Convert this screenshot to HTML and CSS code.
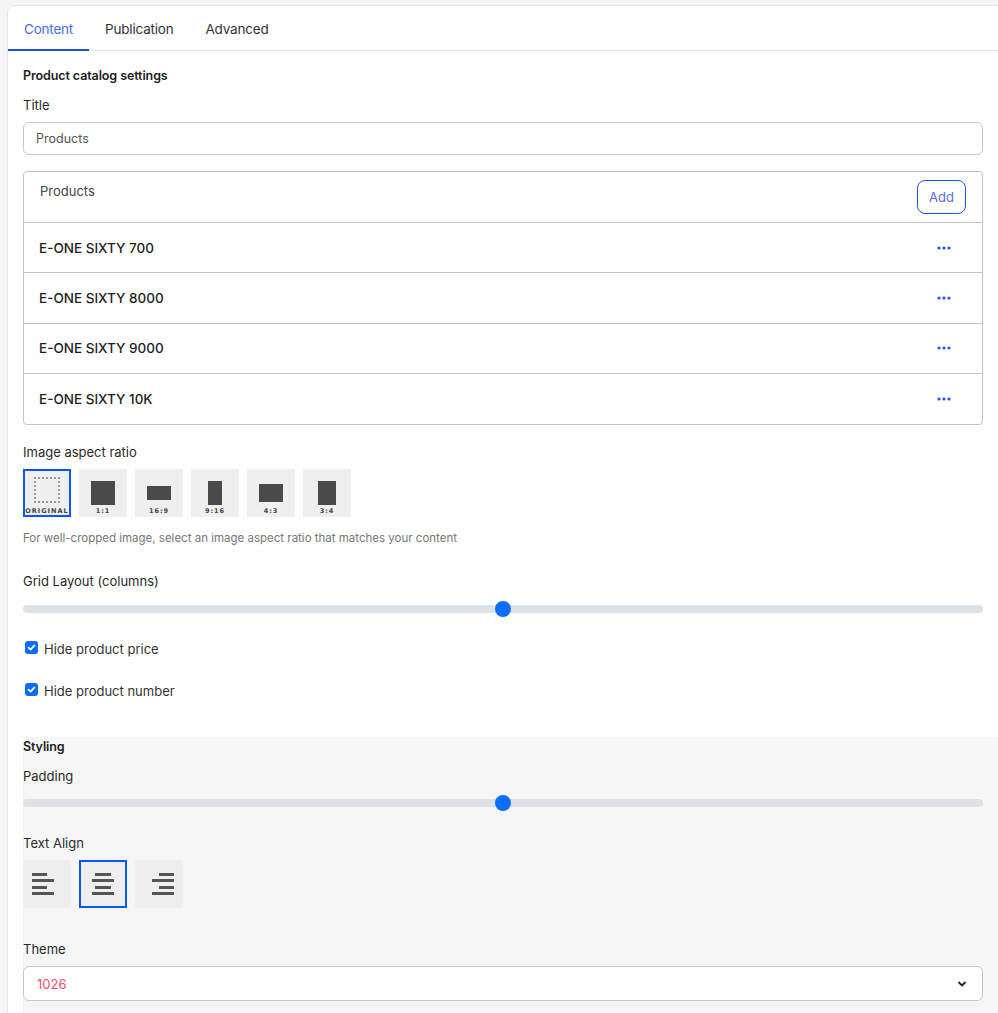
FILE: index.html
```html
<!DOCTYPE html>
<html>
<head>
<meta charset="utf-8">
<link rel="stylesheet" href="styles.css">
</head>
<body>
<div class="card">
  <div class="tabs">
    <div class="tab active">Content</div>
    <div class="tab">Publication</div>
    <div class="tab">Advanced</div>
  </div>
  <div class="content">
    <div class="section-title">Product catalog settings</div>
    <div class="label">Title</div>
    <div class="input">Products</div>

    <div class="products">
      <div class="products-head">
        <span class="products-title">Products</span>
        <button class="add-btn">Add</button>
      </div>
      <div class="prod-row"><span>E-ONE SIXTY 700</span><svg class="dots" width="14" height="4" viewBox="0 0 14 4"><circle cx="2" cy="2" r="1.6"/><circle cx="7" cy="2" r="1.6"/><circle cx="12" cy="2" r="1.6"/></svg></div>
      <div class="prod-row"><span>E-ONE SIXTY 8000</span><svg class="dots" width="14" height="4" viewBox="0 0 14 4"><circle cx="2" cy="2" r="1.6"/><circle cx="7" cy="2" r="1.6"/><circle cx="12" cy="2" r="1.6"/></svg></div>
      <div class="prod-row"><span>E-ONE SIXTY 9000</span><svg class="dots" width="14" height="4" viewBox="0 0 14 4"><circle cx="2" cy="2" r="1.6"/><circle cx="7" cy="2" r="1.6"/><circle cx="12" cy="2" r="1.6"/></svg></div>
      <div class="prod-row"><span>E-ONE SIXTY 10K</span><svg class="dots" width="14" height="4" viewBox="0 0 14 4"><circle cx="2" cy="2" r="1.6"/><circle cx="7" cy="2" r="1.6"/><circle cx="12" cy="2" r="1.6"/></svg></div>
    </div>

    <div class="label label-ratio">Image aspect ratio</div>
    <div class="ratios">
      <div class="ratio selected"><div class="shape original"></div><div class="rlabel">ORIGINAL</div></div>
      <div class="ratio"><div class="shape s11"></div><div class="rlabel">1:1</div></div>
      <div class="ratio"><div class="shape s169"></div><div class="rlabel">16:9</div></div>
      <div class="ratio"><div class="shape s916"></div><div class="rlabel">9:16</div></div>
      <div class="ratio"><div class="shape s43"></div><div class="rlabel">4:3</div></div>
      <div class="ratio"><div class="shape s34"></div><div class="rlabel">3:4</div></div>
    </div>
    <div class="help">For well-cropped image, select an image aspect ratio that matches your content</div>

    <div class="label label-grid">Grid Layout (columns)</div>
    <div class="slider"><div class="thumb"></div></div>

    <label class="check check-first"><span class="box"><svg width="9" height="9" viewBox="0 0 9 9"><path d="M1.5 4.6 L3.6 6.6 L7.5 2.4" fill="none" stroke="#fff" stroke-width="1.7" stroke-linecap="round" stroke-linejoin="round"/></svg></span>Hide product price</label>
    <label class="check"><span class="box"><svg width="9" height="9" viewBox="0 0 9 9"><path d="M1.5 4.6 L3.6 6.6 L7.5 2.4" fill="none" stroke="#fff" stroke-width="1.7" stroke-linecap="round" stroke-linejoin="round"/></svg></span>Hide product number</label>

    <div class="styling">
      <div class="section-title">Styling</div>
      <div class="label">Padding</div>
      <div class="slider"><div class="thumb"></div></div>
      <div class="label label-align">Text Align</div>
      <div class="aligns">
        <div class="align left"><span class="l1"></span><span class="l2"></span><span class="l1"></span><span class="l2"></span></div>
        <div class="align center selected"><span class="l1"></span><span class="l2"></span><span class="l1"></span><span class="l2"></span></div>
        <div class="align right"><span class="l1"></span><span class="l2"></span><span class="l1"></span><span class="l2"></span></div>
      </div>
      <div class="label label-theme">Theme</div>
      <div class="select">
        <span class="select-val">1026</span>
        <svg class="chev" width="10" height="8" viewBox="0 0 10 8"><path d="M2 2.5 L5 5.5 L8 2.5" fill="none" stroke="#222" stroke-width="1.8" stroke-linecap="round" stroke-linejoin="round"/></svg>
      </div>
    </div>
  </div>
</div>
</body>
</html>
```
FILE: styles.css
```css
* { box-sizing: border-box; }
html, body { margin: 0; padding: 0; }
body {
  background: #f5f5f5;
  font-family: Inter, "Noto Sans", sans-serif;
  color: #222;
  font-size: 13px;
  overflow: hidden;
  height: 1013px;
}
.card {
  margin: 5px 0 0 7px;
  width: 1000px;
  background: #fff;
  border: 1px solid #e6e6e6;
  border-radius: 8px 0 0 0;
  min-height: 1020px;
}
.tabs {
  display: flex;
  height: 45px;
  border-bottom: 1px solid #dde3f0;
}
.tab {
  padding: 2px 16px 0;
  display: flex;
  align-items: center;
  font-size: 13.5px;
  color: #333;
  margin-bottom: -1px;
  border-bottom: 2px solid transparent;
  letter-spacing: -0.2px;
}
.tab.active {
  color: #4a6cf7;
  border-bottom-color: #1a4fe0;
}
.content {
  padding: 0 0 0 15px;
}
.content > * { margin-right: 23px; }
.section-title {
  font-weight: 600;
  font-size: 12.5px;
  color: #1d1d1d;
  margin-top: 16px;
  line-height: 18px;
  letter-spacing: -0.1px;
}
.label {
  font-size: 13px;
  color: #2a2a2a;
  line-height: 18px;
  margin-top: 11px;
}
.input {
  margin-top: 8px;
  height: 33px;
  border: 1px solid #c6c6c6;
  border-radius: 6px;
  padding: 0 12px;
  display: flex;
  align-items: center;
  color: #555;
  font-size: 12.5px;
}
.products {
  margin-top: 16px;
  border: 1px solid #c4c4c4;
  border-radius: 4px;
}
.products-head {
  height: 51px;
  display: flex;
  justify-content: space-between;
  align-items: flex-start;
  padding: 0 16px 0 16px;
  border-bottom: 1px solid #c4c4c4;
}
.products-title {
  margin-top: 11px;
  font-size: 13px;
  color: #444;
}
.add-btn {
  margin-top: 8px;
  width: 49px;
  height: 34px;
  border: 1.3px solid #1a56e8;
  border-radius: 8px;
  background: #fff;
  color: #5a6cf0;
  font-family: inherit;
  font-size: 13px;
  padding: 0;
}
.prod-row {
  height: 50.3px;
  display: flex;
  justify-content: space-between;
  align-items: center;
  padding: 0 31px 0 15px;
  border-bottom: 1px solid #c4c4c4;
  font-weight: 500;
  font-size: 13.5px;
  color: #1e1e1e;
}
.prod-row:last-child { border-bottom: none; }
.dots { fill: #2b4ef0; }
.label-ratio { margin-top: 18px; }
.ratios {
  display: flex;
  gap: 8px;
  margin-top: 8px;
}
.ratio {
  width: 48px;
  height: 48px;
  background: #efefef;
  display: flex;
  flex-direction: column;
  align-items: center;
  justify-content: flex-end;
  position: relative;
}
.ratio.selected { border: 2px solid #0a55ff; }
.shape {
  background: #4a4a4a;
  position: absolute;
  left: 50%;
  transform: translateX(-50%);
}
.shape.original {
  background: transparent;
  border: 2px dotted #999;
  width: 26px;
  height: 26px;
  top: 6px;
}
.s11 { width: 24px; height: 24px; top: 12px; }
.s169 { width: 24px; height: 14px; top: 17px; }
.s916 { width: 14px; height: 24px; top: 12px; }
.s43 { width: 24px; height: 18px; top: 15px; }
.s34 { width: 18px; height: 24px; top: 12px; }
.rlabel {
  font-size: 6.5px;
  font-weight: 700;
  letter-spacing: 1px;
  color: #444;
  margin-bottom: 2px;
  font-family: "DejaVu Sans", sans-serif;
}
.ratio.selected .rlabel { margin-bottom: 0; }
.help {
  margin-top: 13px;
  font-size: 11.5px;
  color: #777;
  line-height: 16px;
}
.label-grid { margin-top: 26px; }
.slider {
  margin-top: 15px;
  height: 8px;
  border-radius: 4px;
  background: #dee2e6;
  position: relative;
}
.thumb {
  position: absolute;
  left: calc(50% - 8px);
  top: -4px;
  width: 16px;
  height: 16px;
  border-radius: 50%;
  background: #0d6efd;
}
.check {
  display: flex;
  align-items: center;
  font-size: 13px;
  color: #333;
  margin-top: 24px;
  margin-left: 2px;
  line-height: 18px;
}
.check-first { margin-top: 27px; }
.box {
  width: 13px;
  height: 13px;
  background: #0d6efd;
  border-radius: 3px;
  display: flex;
  align-items: center;
  justify-content: center;
  margin-right: 6px;
  margin-top: -3px;
}
.styling {
  margin-top: 37px;
  margin-right: -2px;
  background: #f6f6f6;
  padding: 1px 25px 20px 0;
}
.styling .section-title { margin-top: 0; }
.styling .label { margin-top: 11px; }
.styling .slider { margin-top: 14px; }
.label-align { margin-top: 27px !important; }
.aligns {
  display: flex;
  gap: 8px;
  margin-top: 8px;
}
.align {
  width: 48px;
  height: 48px;
  background: #efefef;
  display: flex;
  flex-direction: column;
  justify-content: center;
  gap: 3.5px;
  padding: 0 9px;
}
.align span { height: 3px; background: #555; display: block; }
.align.left { align-items: flex-start; }
.align.center { align-items: center; }
.align.right { align-items: flex-end; }
.align .l1 { width: 15px; }
.align .l2 { width: 22px; }
.align.center .l1 { width: 16px; }
.align.selected { border: 2px solid #0a55ff; }
.label-theme { margin-top: 32px !important; }
.select {
  margin-top: 8px;
  height: 35px;
  background: #fff;
  border: 1px solid #c6c6c6;
  border-radius: 6px;
  display: flex;
  align-items: center;
  justify-content: space-between;
  padding: 0 15px 0 13px;
}
.select-val { color: #e8506a; font-size: 13px; }
```
